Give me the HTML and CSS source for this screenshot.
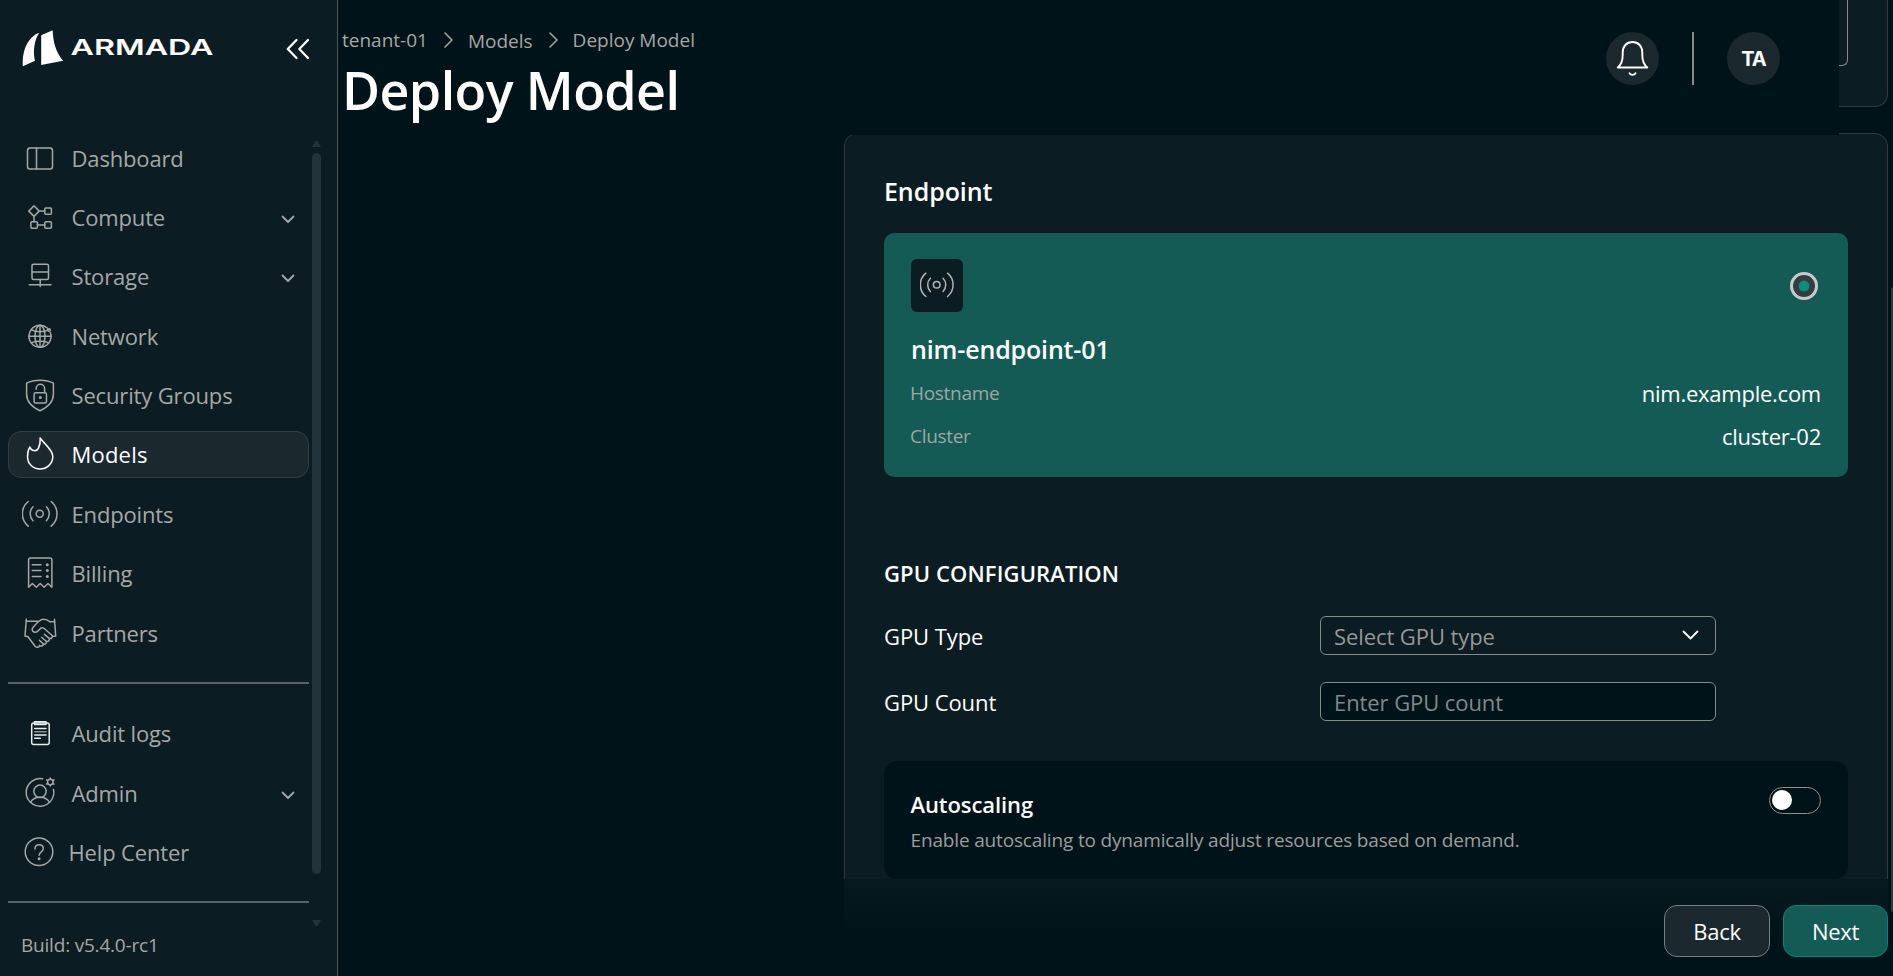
FILE: index.html
```html
<!DOCTYPE html>
<html lang="en">
<head>
    <meta charset="UTF-8">
    <title>Deploy Model</title>
    <link rel="stylesheet" href="styles.css">
</head>
<body>
<aside class="sidebar">
    <div class="sidebar-top">
        <svg class="logo" width="194" height="40" viewBox="0 0 194 40" fill="#fff">
            <path d="M.8 36.2C0 21.500 4.500 11 13 4.800c1-.8 2.500-1.500 4.200-2-4.400 6.500-6.700 18-4.200 28z"/>
            <path d="M19.200 5.200 30.600.2c.6 12.300 3.400 22.300 10.600 30.600l-22 4.200z"/>
            <text x="48.500" y="25" class="logo-text" textLength="143" lengthAdjust="spacingAndGlyphs">ARMADA</text>
        </svg>
        <svg class="collapse" width="24" height="22" viewBox="0 0 24 22">
            <path d="M10.500 2 1.800 11l8.700 9M22 2l-8.700 9 8.700 9"/>
        </svg>
    </div>
    <nav class="nav">
        <a class="nav-item">
            <svg viewBox="0 0 36 36"><rect x="5.500" y="8" width="25" height="21" rx="2.500"/><path d="M14.500 8v21"/></svg>
            <span>Dashboard</span>
        </a>
        <a class="nav-item">
            <svg viewBox="0 0 36 36"><path d="M12 6.800l5.200 5.300-5.200 5.300-5.200-5.300zM17.200 12.100h5.600M12 17.400v5.200M15.400 26h7.400"/><rect x="22.800" y="9" width="6.600" height="6.300" rx="1"/><rect x="8.900" y="22.700" width="6.500" height="6.600" rx="1"/><rect x="22.800" y="22.700" width="6.600" height="6.600" rx="1"/></svg>
            <span>Compute</span>
            <svg class="chev" viewBox="0 0 14 9"><path d="M1.500 1.500 7 7l5.500-5.500"/></svg>
        </a>
        <a class="nav-item">
            <svg viewBox="0 0 36 36"><rect x="10" y="6.300" width="16.500" height="15.200" rx="1.500"/><path d="M10 14h16.500M18.200 21.500v7M7.300 26.700H29"/></svg>
            <span>Storage</span>
            <svg class="chev" viewBox="0 0 14 9"><path d="M1.500 1.500 7 7l5.500-5.500"/></svg>
        </a>
        <a class="nav-item">
            <svg viewBox="0 0 36 36"><path d="M28.300 14.500A11 11 0 1 1 25.500 10.300"/><ellipse cx="18" cy="18.300" rx="5" ry="11"/><path d="M18 7.300v22M7 18.300h22M9.300 11.800c5 2.500 12.400 2.500 17.400 0M9.300 24.800c5-2.500 12.400-2.500 17.400 0"/><circle cx="27" cy="12" r="1.300"/></svg>
            <span>Network</span>
        </a>
        <a class="nav-item">
            <svg viewBox="0 0 36 36"><path d="M4.600 6.200C12 2.300 24 2.300 31.400 6.200V17c0 9.500-7.400 14-13.400 16.700C12 31 4.600 26.500 4.600 17z"/><rect x="12.100" y="15.700" width="12.400" height="10.300" rx="1.500"/><path d="M14.200 12.300V11.500a4.200 4.200 0 0 1 8.400 0v4"/><circle class="dot" cx="18.300" cy="20.600" r="1.500"/></svg>
            <span>Security Groups</span>
        </a>
        <a class="nav-item active">
            <svg viewBox="0 0 36 36"><path d="M18.200 2c.3 4.500-.3 7.500-1.800 10.400-1.500 3.200-7 3.200-8.600-1.400C6.200 13.500 5.500 17 5.500 20.500 5.500 28 11 33 18 33s12.800-5.500 12.800-12.500C30.800 13.500 22.500 8.500 18.200 2z"/></svg>
            <span>Models</span>
        </a>
        <a class="nav-item">
            <svg viewBox="0 0 36 36"><circle cx="17.700" cy="17.800" r="3.500"/><path d="M11 10.800a10 10 0 0 0 0 14M24.400 10.800a10 10 0 0 1 0 14M6.200 5.500a16 16 0 0 0 0 24.700M29.200 5.500a16 16 0 0 1 0 24.700"/></svg>
            <span>Endpoints</span>
        </a>
        <a class="nav-item">
            <svg viewBox="0 0 36 36"><path d="M6.600 32.300V5a2 2 0 0 1 2-2h19.300a2 2 0 0 1 2 2v27.300l-3.900-3.800-3.900 3.800-3.900-3.800-3.900 3.800-3.900-3.800z"/><path d="M10.300 9.700H19M10.300 15.500H19M10.300 21.400H19"/><circle class="dot" cx="25.300" cy="9.700" r="1.500"/><circle class="dot" cx="25.300" cy="15.500" r="1.500"/><circle class="dot" cx="25.300" cy="21.400" r="1.500"/></svg>
            <span>Billing</span>
        </a>
        <a class="nav-item">
            <svg viewBox="0 0 36 36"><path d="M4.300 4.300 3 21l3 .8 7.300 9.700c1.500 1.300 3.500.9 4.500-.7M4 6.200h12M32.500 4.300 33.700 21l-3.500.5M32.500 6.500l-4.700.2C25 4.500 22 3.800 19 4.800c-3.200 1.600-6 5-8.600 8.500-.8 2.200.8 4.200 3.200 4 2.600-.2 3.600-3 5.700-4.400 2-.6 3.400.6 4.600 2.100l6.300 5.500c.8 1.800-.8 3.600-3 2.900l-4.800-4M27.200 23.400c.9 2-1 3.600-3 2.800l-4.600-4M24.200 26.400c.6 2-1 3.300-2.800 2.500l-4-3.600M21.300 29c0 2-2 2.700-4 1.300"/></svg>
            <span>Partners</span>
        </a>
        <hr class="rule">
        <a class="nav-item">
            <svg class="bright" viewBox="0 0 36 36"><rect x="9.700" y="8" width="17.500" height="21.600" rx="2"/><rect x="12.500" y="6.800" width="11.500" height="2.600"/><path d="M12.700 13.500H24M12.700 19.900H24M12.700 23.300h5.600"/><path class="dim" d="M12.700 16.700H24"/></svg>
            <span>Audit logs</span>
        </a>
        <a class="nav-item">
            <svg viewBox="0 0 36 36"><path d="M20.500 3.800a13.800 13.800 0 1 0 11 10.700"/><circle cx="18" cy="16.300" r="6.200"/><path d="M8.500 27.300c2-3.300 5.300-5 9.500-5s7.500 1.700 9.500 5"/><circle cx="28.300" cy="7" r="2.800"/><path d="M28.300 2.900v1M28.300 10.100v1M24.600 4.900l1 .6M31 8.500l1 .6M24.600 9.100l1-.6M31 5.500l1-.6"/></svg>
            <span>Admin</span>
            <svg class="chev" viewBox="0 0 14 9"><path d="M1.500 1.500 7 7l5.500-5.500"/></svg>
        </a>
        <a class="nav-item help">
            <svg viewBox="0 0 36 36"><circle cx="18" cy="17.800" r="13.800"/><path d="M14 15c0-2.600 1.700-4.200 4.100-4.200s4.200 1.600 4.200 3.900c0 3-4.200 3.300-4.200 6.600"/><circle class="dot" cx="18.100" cy="24.800" r="1.500"/></svg>
            <span>Help Center</span>
        </a>
        <hr class="rule last">
    </nav>
    <div class="build">Build: v5.4.0-rc1</div>
    <div class="side-scroll">
        <svg width="9" height="6" viewBox="0 0 9 6"><path d="M3.500 0h2L9 6H0z"/></svg>
        <div class="side-thumb"></div>
        <svg width="9" height="6" viewBox="0 0 9 6"><path d="M0 0h9L5.500 6h-2z"/></svg>
    </div>
</aside>

<main class="main">
    <div class="content">
        <section class="card card-prev">
            <div class="field-box"></div>
        </section>
        <section class="card">
            <h2>Endpoint</h2>
            <div class="endpoint">
                <div class="endpoint-top">
                    <div class="tile">
                        <svg width="34" height="34" viewBox="0 0 36 36"><circle cx="17.700" cy="17.800" r="3.500"/><path d="M11 10.800a10 10 0 0 0 0 14M24.400 10.800a10 10 0 0 1 0 14M6.200 5.500a16 16 0 0 0 0 24.700M29.200 5.500a16 16 0 0 1 0 24.700"/></svg>
                    </div>
                    <span class="radio"></span>
                </div>
                <h3>nim-endpoint-01</h3>
                <div class="pair"><span>Hostname</span><b>nim.example.com</b></div>
                <div class="pair"><span>Cluster</span><b>cluster-02</b></div>
            </div>

            <h4>GPU CONFIGURATION</h4>
            <div class="form-row">
                <label>GPU Type</label>
                <div class="control select">
                    <span>Select GPU type</span>
                    <svg width="17" height="10" viewBox="0 0 17 10"><path d="M1.500 1.500l7 7 7-7"/></svg>
                </div>
            </div>
            <div class="form-row">
                <label>GPU Count</label>
                <div class="control input"><span>Enter GPU count</span></div>
            </div>

            <div class="autoscale">
                <div>
                    <h5>Autoscaling</h5>
                    <p>Enable autoscaling to dynamically adjust resources based on demand.</p>
                </div>
                <span class="toggle"></span>
            </div>
        </section>
    </div>

    <header class="header">
        <div>
            <div class="crumbs">
                <span>tenant-01</span>
                <svg width="9" height="16" viewBox="0 0 9 16"><path d="M1 1l7 7-7 7"/></svg>
                <span class="crumb-mid">Models</span>
                <svg width="9" height="16" viewBox="0 0 9 16"><path d="M1 1l7 7-7 7"/></svg>
                <span>Deploy Model</span>
            </div>
            <h1>Deploy Model</h1>
        </div>
        <div class="tools">
            <div class="round">
                <svg width="33" height="38" viewBox="0 0 33 38"><path d="M1.700 28.500h29.600c-3.300-2.700-5-6.500-5-12.500v-2.500C26.300 7.500 22.500 3 16.500 3S6.700 7.500 6.700 13.500V16c0 6-1.700 9.800-5 12.500zM13.500 34.200c1.300 2.200 4.700 2.200 6 0"/></svg>
            </div>
            <div class="divider"></div>
            <div class="round">TA</div>
        </div>
    </header>

    <footer class="footer">
        <button class="btn">Back</button>
        <button class="btn primary">Next</button>
    </footer>
    <div class="page-scroll"></div>
</main>
</body>
</html>
```

FILE: styles.css
```css
*{
    box-sizing: border-box;
    margin: 0;
}
body{
    display: flex;
    height: 976px;
    overflow: hidden;
    background: #001318;
    color: #fff;
    font: 22px/30px "Open Sans", "Noto Sans", sans-serif;
    letter-spacing: -.08px;
}
svg{
    fill: none;
    stroke: currentColor;
    stroke-linecap: round;
    stroke-linejoin: round;
    flex: none;
}

/* sidebar */
.sidebar{
    position: relative;
    display: flex;
    flex-direction: column;
    flex: none;
    width: 338px;
    background: #0b1c22;
    border-right: 1px solid #4d5759;
}
.sidebar-top{
    display: flex;
    justify-content: space-between;
    align-items: flex-start;
    height: 134px;
    padding: 30px 27px 0 22px;
}
.logo{
    fill: #fff;
    stroke: none;
}
.logo-text{
    font: 600 22px Inter, sans-serif;
    letter-spacing: 0;
}
.collapse{
    margin-top: 8px;
    stroke-width: 2.3;
}
.nav{
    display: flex;
    flex-direction: column;
    gap: 12.4px;
    padding: 0 28px 0 8px;
}
.nav-item{
    display: flex;
    align-items: center;
    height: 47px;
    padding: 0 13px;
    border: 1px solid transparent;
    border-radius: 13px;
    color: #a5a8a7;
}
.nav-item svg{
    width: 36px;
    height: 36px;
    stroke-width: 1.5;
}
.nav-item span{
    flex: 1;
    margin-left: 13.5px;
    letter-spacing: -.15px;
}
.nav-item .chev{
    width: 14px;
    height: 9px;
    margin-top: 5px;
    stroke-width: 1.8;
}
.nav-item .dot{
    fill: currentColor;
    stroke: none;
}
.nav-item .bright{
    color: #e9edee;
}
.nav-item .dim{
    stroke: #8c9092;
}
.nav-item.active{
    background: #1b292f;
    border-color: #333e43;
    color: #fff;
}
.nav-item.active span{
    letter-spacing: .2px;
}
.nav-item.help{
    padding-left: 11.5px;
}
.nav-item.help span{
    margin-left: 12px;
    padding-top: 1px;
}
.rule{
    height: 2px;
    margin: 13.400px 0;
    border: 0;
    background: #5c6264;
}
.rule.last{
    margin-bottom: 0;
}
.build{
    margin: 27px 0 0 21px;
    color: #a5a8a7;
    font-size: 19px;
    letter-spacing: -.2px;
}
.side-scroll{
    position: absolute;
    top: 141px;
    left: 312px;
    display: flex;
    flex-direction: column;
    width: 9px;
}
.side-scroll svg{
    fill: #23333a;
    stroke: none;
}
.side-thumb{
    height: 721px;
    margin: 6px 0 46px;
    border-radius: 5px;
    background: #23333a;
}

/* main */
.main{
    position: relative;
    flex: 1;
    overflow: hidden;
}
.content{
    display: flex;
    flex-direction: column;
    gap: 26px;
    margin: 0 5px 0 506px;
}
.card{
    height: 900px;
    padding: 40px 39px;
    border: 1px solid #2f3a3f;
    border-radius: 13px;
    background: #0b1c22;
}
.card-prev{
    height: 107px;
    padding-top: 0;
    border-top: 0;
    border-radius: 0 0 13px 13px;
}
.field-box{
    height: 66px;
    border: 1px solid #858b8d;
    border-top: 0;
    border-radius: 0 0 6px 6px;
}
h2, h3{
    font-size: 25px;
    line-height: 34px;
    font-weight: 600;
}
h2{
    margin-bottom: 25px;
}
.endpoint{
    height: 244px;
    padding: 26px 27px;
    border-radius: 10px;
    background: #145b56;
}
.endpoint-top{
    display: flex;
    justify-content: space-between;
    align-items: center;
    margin-bottom: 20px;
}
.tile{
    display: flex;
    align-items: center;
    justify-content: center;
    width: 52px;
    height: 53px;
    border-radius: 6px;
    background: #0b1c22;
    color: #b3b3b3;
}
.tile svg{
    margin: -1px 0 0 -1px;
    stroke-width: 1.6;
}
.radio{
    width: 28px;
    height: 28px;
    margin-right: 3px;
    border: 3px solid #c9c9c9;
    border-radius: 50%;
    background: radial-gradient(circle, #04907f 5px, #343c42 5.800px);
}
h3{
    margin-bottom: 5px;
    font-weight: 650;
    letter-spacing: -.15px;
}
.pair{
    display: flex;
    justify-content: space-between;
    align-items: center;
    height: 43px;
}
.pair span{
    margin-left: -1px;
    color: #9fa6a4;
    font-size: 19px;
    letter-spacing: -.3px;
}
.pair b{
    font-weight: 400;
    letter-spacing: -.25px;
}
h4{
    margin: 81px 0 28px;
    font-size: 22px;
    font-weight: 600;
    letter-spacing: .12px;
}
.form-row{
    display: flex;
    align-items: center;
    margin-bottom: 27px;
}
label{
    width: 436px;
}
.control{
    display: flex;
    justify-content: space-between;
    align-items: center;
    width: 396px;
    height: 39px;
    padding: 0 16px 0 13px;
    border: 1px solid #868b8d;
    border-radius: 6px;
    color: #959898;
}
.control svg{
    margin-top: -2px;
    color: #fff;
    stroke-width: 1.8;
}
.input{
    background: #001318;
    color: #7f8a8d;
}
.autoscale{
    display: flex;
    justify-content: space-between;
    height: 118px;
    margin-top: 40px;
    padding: 26px 27px;
    border-radius: 13px;
    background: #001318;
}
h5{
    margin: 2px 0 6px;
    font-size: 22px;
    font-weight: 600;
}
p{
    color: #9a9e9d;
    font-size: 19px;
    letter-spacing: -.16px;
}
h5, p{
    margin-left: -.5px;
}
.toggle{
    width: 52px;
    height: 27px;
    padding: 2px;
    border: 1px solid #8a9092;
    border-radius: 14px;
}
.toggle::before{
    content: "";
    display: block;
    width: 20px;
    height: 20px;
    border-radius: 50%;
    background: #fff;
}

/* header stays over the scrolled content */
.header{
    position: absolute;
    top: 0;
    left: 0;
    display: flex;
    justify-content: space-between;
    width: 1501px;
    height: 135px;
    padding: 26px 59px 0 4px;
    background: #001318;
}
.crumbs{
    display: flex;
    align-items: center;
    height: 28px;
    margin-bottom: 4px;
    color: #a5a8a7;
    font-size: 19px;
    letter-spacing: 0;
}
.crumbs svg{
    margin: -1px 15px 0 16px;
    stroke-width: 1.5;
}
.crumb-mid{
    padding-top: 1px;
}
h1{
    font-size: 52px;
    line-height: 64px;
    font-weight: 600;
    letter-spacing: -.6px;
}
.tools{
    display: flex;
    gap: 33px;
    padding-top: 6px;
}
.round{
    display: flex;
    align-items: center;
    justify-content: center;
    width: 53px;
    height: 53px;
    border-radius: 50%;
    background: #1b292f;
    font: 700 20px Inter, sans-serif;
    letter-spacing: -1px;
}
.round svg{
    margin-top: -1px;
    stroke-width: 1.9;
}
.divider{
    width: 2px;
    height: 53px;
    background: #8a8a8a;
}

/* footer */
.footer{
    position: absolute;
    left: 506px;
    right: 5px;
    bottom: 0;
    display: flex;
    justify-content: flex-end;
    gap: 13px;
    height: 97px;
    padding-top: 26px;
    background: linear-gradient(#07191e, #001318 60%);
}
.btn{
    width: 106px;
    height: 52px;
    padding: 0;
    border: 1px solid #767f83;
    border-radius: 13px;
    background: #1b292f;
    color: #fff;
    font: inherit;
    letter-spacing: -.3px;
}
.btn.primary{
    width: 105px;
    border-color: #078577;
    background: #145b56;
}
.page-scroll{
    position: absolute;
    top: 287px;
    right: 0;
    width: 2px;
    height: 625px;
    border-radius: 2px 0 0 2px;
    background: #2b3a3f;
}
```
